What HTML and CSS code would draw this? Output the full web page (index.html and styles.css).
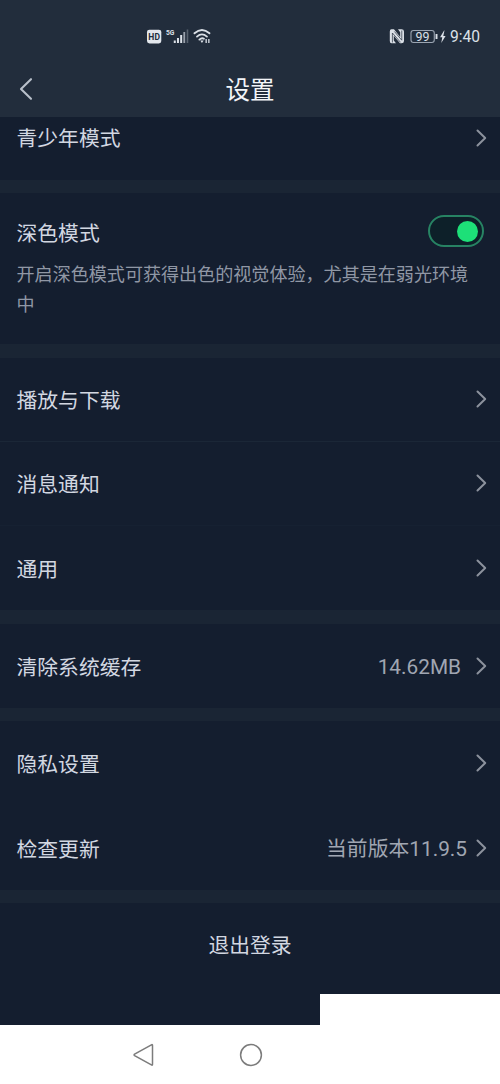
FILE: index.html
```html
<!DOCTYPE html>
<html lang="zh-CN">
<head>
<meta charset="utf-8">
<title>设置</title>
<link rel="stylesheet" href="styles.css">
</head>
<body>
<div class="screen">
  <header class="header">
    <div class="status">
      <svg class="status-left" width="66" height="20" viewBox="146 26 66 20">
        <rect x="147" y="29.7" width="14.3" height="13.8" rx="2.5" fill="#e3e7ec"/>
        <text class="hd" x="148.3" y="39.9" textLength="11.8">HD</text>
        <text class="fiveg" x="166" y="35.4" textLength="8.4" lengthAdjust="spacingAndGlyphs">5G</text>
        <g fill="#dce1e8"><rect x="173.8" y="40.5" width="2" height="2.5"/><rect x="177" y="38" width="2" height="5"/><rect x="180.2" y="35" width="2" height="8"/><rect x="183.4" y="32" width="1.8" height="11" opacity=".65"/><rect x="186.7" y="29.5" width="1.6" height="13.5" opacity=".3"/></g>
        <g fill="none" stroke="#dce1e8" stroke-width="1.8" stroke-linecap="round"><path d="M194.5 33.3Q202 26.8 209.5 33.3"/><path d="M197 36.6Q202 32.2 207 36.6"/><path d="M199.4 39.6Q202 37.3 204 38.8"/></g>
        <path d="M200.3 40.5h3.4L202 43z" fill="#dce1e8"/>
        <path d="M206.2 39v4M208.9 39v4" stroke="#dce1e8" stroke-width="1.3"/>
      </svg>
      <svg class="status-right" width="60" height="20" viewBox="388 26 60 20">
        <g fill="#dce1e8"><path d="M391.5 29.3H394L400.2 37V32.3L398 29.3H401.5Q404 29.3 404 31.5V41Q404 43.3 401.5 43.3H400L393.8 35.8V40.5L396 43.3H391.5Q389.8 43.3 389.8 41V31.5Q389.8 29.3 391.5 29.3Z"/></g>
        <path d="M392.4 42.5V33L400.6 42.4M401.8 30.5V40.2L394.4 31.5" fill="none" stroke="#222d3c" stroke-width=".7"/>
        <path d="M435.6 34h1.9v5h-1.9zM444.1 30.5l-4 6.8h2.2l-1 5.8 4.3-7.2h-2.3l1.2-5.4z" fill="#dce1e8"/>
        <rect x="411" y="30.5" width="23.3" height="12" rx="2.5" fill="none" stroke="#9ba5b2" stroke-width="1.1"/>
        <text class="battery" x="415.5" y="41" textLength="14" lengthAdjust="spacingAndGlyphs">99</text>
      </svg>
      <span class="time">9:40</span>
    </div>
    <div class="titlebar">
      <svg class="back" width="14" height="24" viewBox="0 0 14 24"><path d="M12 2.2 2 12l10 9.8"/></svg>
      <h1 class="title">设置</h1>
    </div>
  </header>

  <main>
    <section class="group">
      <div class="row row-first"><span>青少年模式</span><svg class="chevron" viewBox="0 0 11 18"><path d="m1.5 1.5 7.7 7.5-7.7 7.5"/></svg></div>
    </section>
    <section class="group dark-mode">
      <div class="toggle-row"><span>深色模式</span><span class="switch"><span class="knob"></span></span></div>
      <p class="hint">开启深色模式可获得出色的视觉体验，尤其是在弱光环境<br>中</p>
    </section>
    <section class="group">
      <div class="row lined"><span>播放与下载</span><svg class="chevron" viewBox="0 0 11 18"><path d="m1.5 1.5 7.7 7.5-7.7 7.5"/></svg></div>
      <div class="row faint-line"><span>消息通知</span><svg class="chevron" viewBox="0 0 11 18"><path d="m1.5 1.5 7.7 7.5-7.7 7.5"/></svg></div>
      <div class="row"><span>通用</span><svg class="chevron" viewBox="0 0 11 18"><path d="m1.5 1.5 7.7 7.5-7.7 7.5"/></svg></div>
    </section>
    <section class="group">
      <div class="row"><span>清除系统缓存</span><span class="value cache">14.62MB</span><svg class="chevron" viewBox="0 0 11 18"><path d="m1.5 1.5 7.7 7.5-7.7 7.5"/></svg></div>
    </section>
    <section class="group">
      <div class="row"><span>隐私设置</span><svg class="chevron" viewBox="0 0 11 18"><path d="m1.5 1.5 7.7 7.5-7.7 7.5"/></svg></div>
      <div class="row"><span>检查更新</span><span class="value">当前版本11.9.5</span><svg class="chevron" viewBox="0 0 11 18"><path d="m1.5 1.5 7.7 7.5-7.7 7.5"/></svg></div>
    </section>
    <section class="group logout">退出登录</section>
  </main>

  <nav class="navbar">
    <svg width="22" height="24" viewBox="0 0 22 24"><path d="M18.4 1.8Q19.5 1.2 19.5 2.5v18.8q0 1.3-1.1.6L1.6 12.6q-1-.7 0-1.4z"/></svg>
    <svg width="24" height="24" viewBox="0 0 24 24"><circle cx="12" cy="12" r="10.4"/></svg>
  </nav>
  <div class="corner"></div>
</div>
</body>
</html>
```

FILE: styles.css
```css
* { box-sizing: border-box; }

body {
  margin: 0;
  background: #fff;
  font-family: Roboto, "Noto Sans CJK SC", sans-serif;
}

.screen {
  position: relative;
  width: 500px;
  height: 1084px;
  overflow: hidden;
  background: #1a2534;
  color: #d2d7e1;
  font-size: 20.8px;
}

.header {
  height: 117px;
  background: #222d3c;
}

.status {
  display: flex;
  height: 62px;
  padding: 26px 20px 0 146px;
}

.status-right { margin-left: 176px; }

.hd { font: 700 8.5px Roboto, sans-serif; fill: #222d3c; }
.fiveg { font: 700 7.5px Roboto, sans-serif; fill: #dce1e8; }
.battery { font: 12.5px Roboto, sans-serif; fill: #dce1e8; }

.time {
  margin-left: 2px;
  color: #dce1e8;
  font-size: 15.6px;
  line-height: 23px;
}

.titlebar {
  display: grid;
  grid-template-columns: 14px 1fr 14px;
  align-items: center;
  height: 55px;
  padding: 0 19px;
}

.back {
  fill: none;
  stroke: #b9c0ca;
  stroke-width: 2.1;
  stroke-linecap: round;
  stroke-linejoin: round;
  margin-top: -2px;
}

.title {
  margin: 0;
  padding-top: 3px;
  text-align: center;
  color: #f3f5f8;
  font-size: 24.5px;
  font-weight: 400;
  line-height: 36px;
}

main {
  display: flex;
  flex-direction: column;
  gap: 13.5px;
}

.group { background: #141e2f; }

.row {
  display: flex;
  align-items: center;
  height: 84.2px;
  padding: 0 13px 0 16.5px;
  line-height: 30px;
}

.row > span { padding-top: 4px; }
.row > .value { padding-top: 3px; }

.row-first {
  align-items: flex-start;
  height: 62.5px;
  padding-top: 5px;
}

.row-first > span { padding-top: 2px; }

.lined { border-bottom: 1px solid #1b2737; }
.faint-line { border-bottom: 1px solid #162132; }

.chevron {
  flex: none;
  width: 11px;
  height: 18px;
  margin-left: auto;
  fill: none;
  stroke: #8c929d;
  stroke-width: 2;
  stroke-linecap: round;
  stroke-linejoin: round;
}

.row-first .chevron { margin-top: 6.5px; }

.value {
  margin-left: auto;
  color: #a0a6b2;
}

.value + .chevron { margin-left: 9px; }
.cache + .chevron { margin-left: 15px; }

.dark-mode {
  height: 151px;
  padding: 21.5px 16px 0 16.5px;
}

.toggle-row {
  display: flex;
  align-items: center;
  justify-content: space-between;
  height: 34px;
}

.switch {
  display: flex;
  align-items: center;
  justify-content: flex-end;
  width: 56px;
  height: 32px;
  margin-top: -1px;
  padding-right: 4px;
  border: 2px solid #278363;
  border-radius: 16px;
  background: #0d2029;
}

.knob {
  width: 21px;
  height: 21px;
  border-radius: 50%;
  background: #1de078;
}

.hint {
  margin: 11.5px 0 0;
  color: #9097a5;
  font-size: 18.07px;
  line-height: 30px;
  white-space: nowrap;
}

.logout {
  height: 122px;
  padding-top: 27.5px;
  text-align: center;
  line-height: 30px;
}

.navbar {
  display: flex;
  align-items: center;
  gap: 84px;
  height: 59px;
  padding-left: 132.5px;
  background: #fff;
}

.navbar svg {
  fill: none;
  stroke: #7c7c7c;
  stroke-width: 1.5;
}

/* White patch overlapping the lower-right of the page */
.corner {
  position: absolute;
  right: 0;
  bottom: 0;
  width: 180px;
  height: 90px;
  background: #fff;
}
```
